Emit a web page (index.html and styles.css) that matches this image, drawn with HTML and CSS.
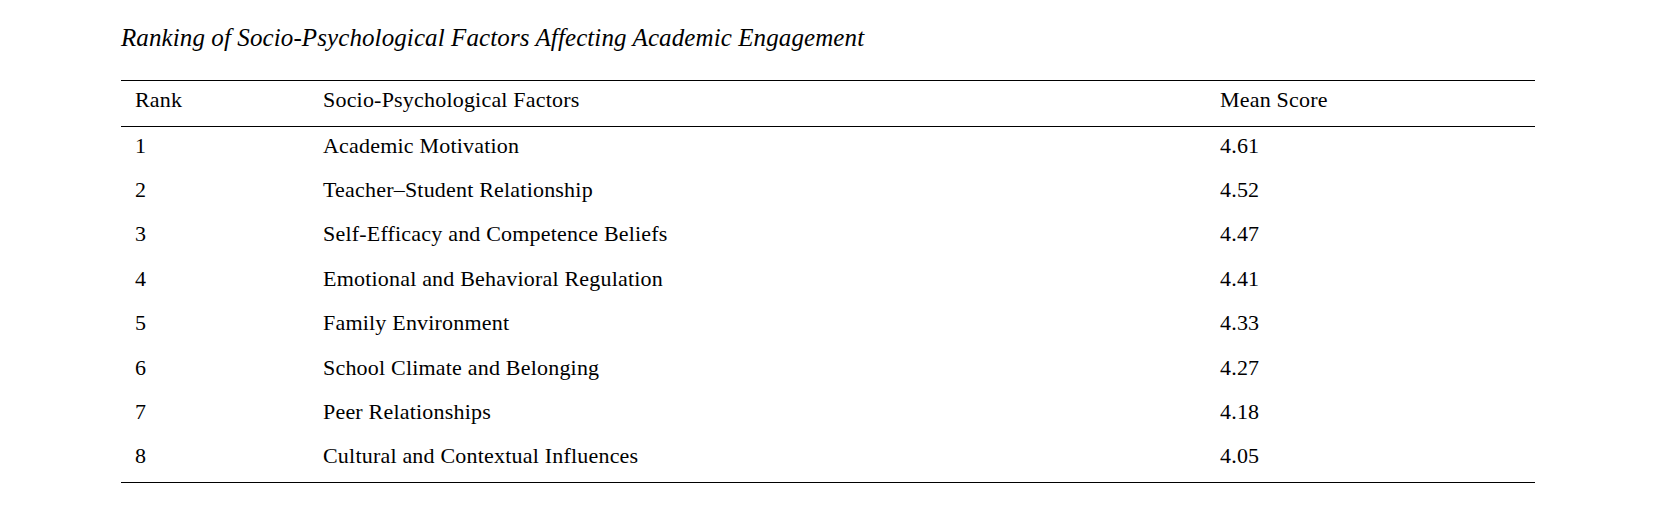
FILE: index.html
```html
<!DOCTYPE html>
<html lang="en">
<head>
<meta charset="utf-8">
<title>Ranking of Socio-Psychological Factors</title>
<link rel="stylesheet" href="styles.css">
</head>
<body>
<div class="page">
  <p class="caption">Ranking of Socio-Psychological Factors Affecting Academic Engagement</p>
  <div class="ranking" role="table">
    <div class="head" role="row">
      <span role="columnheader">Rank</span>
      <span role="columnheader">Socio-Psychological Factors</span>
      <span role="columnheader">Mean Score</span>
    </div>
    <div class="row" role="row"><span>1</span><span>Academic Motivation</span><span>4.61</span></div>
    <div class="row" role="row"><span>2</span><span>Teacher–Student Relationship</span><span>4.52</span></div>
    <div class="row" role="row"><span>3</span><span>Self-Efficacy and Competence Beliefs</span><span>4.47</span></div>
    <div class="row" role="row"><span>4</span><span>Emotional and Behavioral Regulation</span><span>4.41</span></div>
    <div class="row" role="row"><span>5</span><span>Family Environment</span><span>4.33</span></div>
    <div class="row" role="row"><span>6</span><span>School Climate and Belonging</span><span>4.27</span></div>
    <div class="row" role="row"><span>7</span><span>Peer Relationships</span><span>4.18</span></div>
    <div class="row" role="row"><span>8</span><span>Cultural and Contextual Influences</span><span>4.05</span></div>
  </div>
</div>
</body>
</html>
```

FILE: styles.css
```css
html, body {
  margin: 0;
  padding: 0;
  background: #ffffff;
}

body {
  font-family: "Liberation Serif", "Times New Roman", serif;
  color: #000000;
}

.page {
  padding: 23.7px 0 0 121px;
}

.caption {
  margin: 0 0 28.7px 0;
  font-style: italic;
  font-size: 25px;
  letter-spacing: 0.1px;
  line-height: 27.6px;
}

.ranking {
  width: 1414px;
  font-size: 22px;
  letter-spacing: 0.2px;
  line-height: 24px;
  border-top: 1px solid #000;
  border-bottom: 1px solid #000;
}

.head,
.row {
  display: grid;
  grid-template-columns: 188px 897px 329px;
}

.head {
  border-bottom: 1px solid #000;
}

.head span {
  padding: 7.3px 0 13.7px 14px;
}

.row span {
  padding: 6.6px 0 13.8px 14px;
  white-space: nowrap;
}
```
